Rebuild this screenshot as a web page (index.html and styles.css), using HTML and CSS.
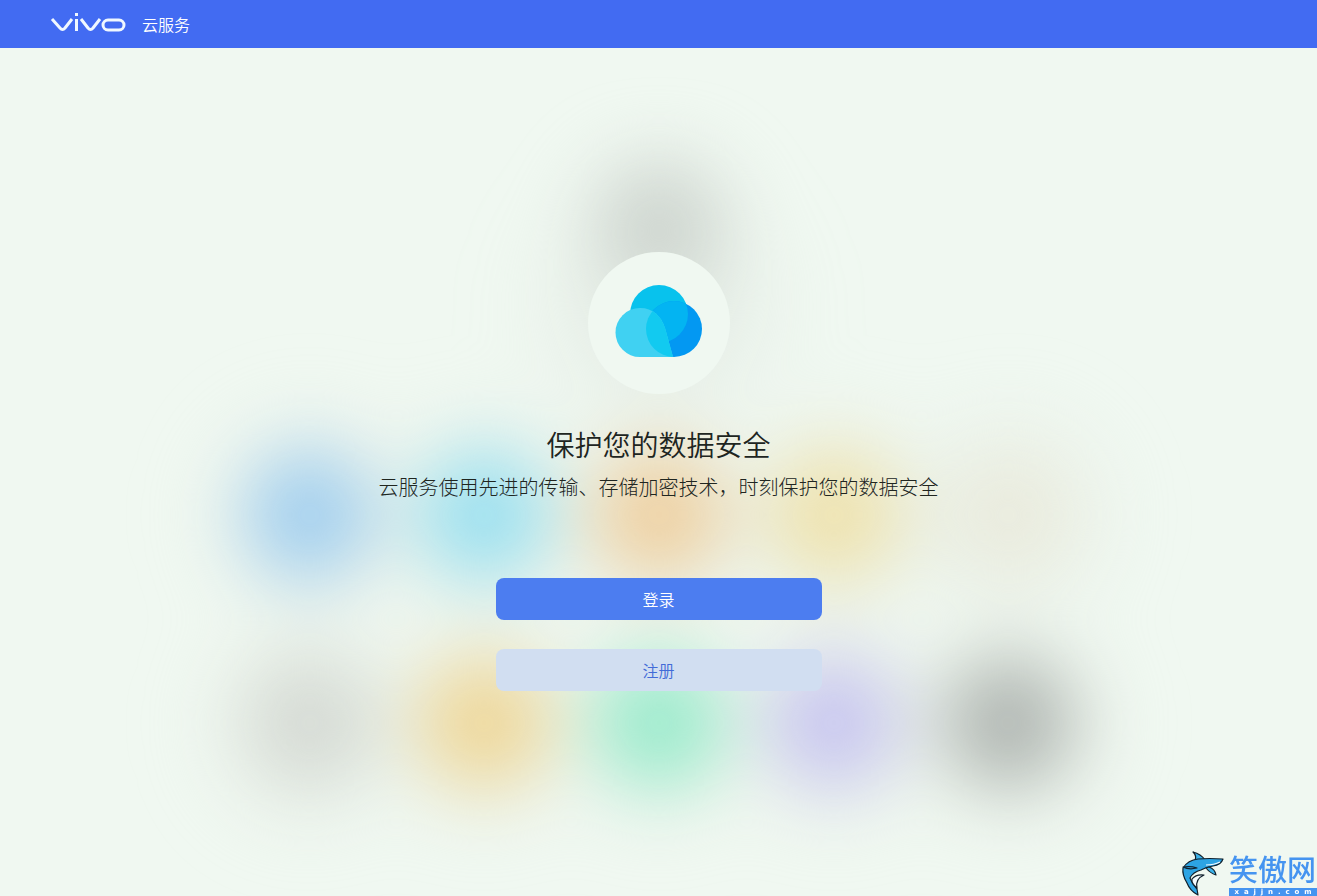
FILE: index.html
```
<!DOCTYPE html>
<html lang="zh-CN">
<head>
<meta charset="UTF-8">
<title>vivo 云服务</title>
<link rel="stylesheet" href="styles.css">
</head>
<body>
<header>
    <a class="logo" href="#" aria-label="vivo">
        <svg width="76" height="24" viewBox="0 0 76 24" fill="none" stroke="#f0f8ff" stroke-width="3" stroke-linejoin="round">
            <path d="M2 7L10 16Q12.500 19 15 16L22 7"/>
            <path d="M26.500 7V19"/>
            <path d="M26.500 1V4"/>
            <path d="M31 7L38 16Q40.500 19 43 16L50 7"/>
            <rect x="53" y="8" width="21" height="10" rx="5"/>
        </svg>
    </a>
    <span class="service">云服务</span>
</header>
<main>
    <div class="backdrop" aria-hidden="true">
        <i class="gray-top"></i>
        <i class="blue"></i>
        <i class="cyan"></i>
        <i class="orange"></i>
        <i class="yellow"></i>
        <i class="beige"></i>
        <i class="silver"></i>
        <i class="amber"></i>
        <i class="green"></i>
        <i class="violet"></i>
        <i class="dark"></i>
    </div>
    <div class="cloud">
        <svg width="88" height="74" viewBox="0 0 88 74">
            <defs>
                <clipPath id="rightClip"><circle cx="59" cy="45" r="28"/></clipPath>
                <clipPath id="leftClip"><path d="M25 73A24 24 0 1 1 25 24C38 24 46 32 50 44L58 73Z"/></clipPath>
            </defs>
            <circle cx="44" cy="30" r="29" fill="#08c2ed"/>
            <circle cx="59" cy="45" r="28" fill="#0398f2"/>
            <circle cx="44" cy="30" r="29" fill="#03b4f2" clip-path="url(#rightClip)"/>
            <path d="M25 73A24 24 0 1 1 25 24C38 24 46 32 50 44L58 73Z" fill="#40d1f2"/>
            <circle cx="59" cy="45" r="28" fill="#12caf0" clip-path="url(#leftClip)"/>
        </svg>
    </div>
    <h1>保护您的数据安全</h1>
    <p>云服务使用先进的传输、存储加密技术，时刻保护您的数据安全</p>
    <button type="button" class="login">登录</button>
    <button type="button" class="register">注册</button>
</main>
<div class="watermark">
    <svg width="44" height="46" viewBox="0 0 44 46" stroke="#10202c" stroke-width="1.2" stroke-linejoin="round">
        <path d="M14 10Q16 6 12 2Q20 4 24 10Z" fill="#3cb4ec"/>
        <path d="M2 18Q7 10 17 9Q28 8 42 9Q40 15 32 16Q25 17 20 20Q12 22 9 28Q11 34 16 39L17 45Q9 41 6 33Q1 25 2 18Z" fill="#2da4e4"/>
        <path d="M16 38Q14 29 23 25Q15 24 11 29Q10 33 16 38Z" fill="#f4fbff"/>
        <path d="M28 17Q34 19 35 25Q29 23 25 18Z" fill="#3cb4ec"/>
        <path d="M2 17Q8 20 16 18Q10 16 2 17Z" fill="#3cb4ec"/>
        <path d="M25 15Q33 15 39 12" fill="none" stroke="#f4fbff"/>
    </svg>
    <div class="site">
        <strong>笑傲网</strong>
        <small>x  a  j  j  n  .  c  o  m</small>
    </div>
</div>
</body>
</html>
```

FILE: styles.css
```
*{box-sizing:border-box;}
body{
    margin:0;
    min-height:100vh;
    display:flex;
    flex-direction:column;
    font-family:"Noto Sans CJK SC",sans-serif;
    font-weight:300;
    background:#f0f8f1;
    color:#20251f;
}
header{
    display:flex;
    align-items:center;
    height:48px;
    padding:0 50px;
    gap:16px;
    background:#426bf2;
    color:#fff;
}
.logo{display:flex;}
.service{font-size:16px;line-height:24px;font-weight:350;}
main{
    position:relative;
    flex:1;
    display:flex;
    flex-direction:column;
    align-items:center;
    padding-top:204px;
    overflow:hidden;
}
.backdrop{
    position:absolute;
    top:112px;
    left:50%;
    transform:translateX(-50%);
    display:grid;
    grid-template-columns:repeat(5,130px);
    grid-template-rows:212px 130px 130px;
    column-gap:45px;
    row-gap:78px;
    filter:blur(36px);
}
.backdrop i{
    border-radius:50%;
    box-shadow:0 0 50px 16px rgba(225,232,222,0.6);
}
.backdrop .gray-top{
    grid-column:3;
    height:130px;
    background:#ced5cf;
    box-shadow:0 80px 70px 30px rgba(210,217,211,0.4);
}
.backdrop .blue{grid-column:1;background:#a2cfef;}
.cyan{background:#9ae0f0;}
.orange{background:#efd0a0;}
.yellow{background:#efe2ac;}
.beige{background:#eaebdd;}
.silver{background:#d5dad4;}
.amber{background:#efd798;}
.green{background:#9aebcc;}
.violet{background:#c8c6f0;}
.dark{background:#b0b6b2;}
.cloud{
    position:relative;
    display:flex;
    align-items:center;
    justify-content:center;
    width:142px;
    height:142px;
    padding-bottom:4px;
    border-radius:50%;
    background:#f0f8f1;
}
h1,p,button{position:relative;}
h1{
    margin:30px 0 0;
    font-size:28px;
    line-height:40px;
    font-weight:350;
}
p{
    margin:8px 0 76px;
    font-size:20px;
    line-height:30px;
}
button{
    width:326px;
    height:42px;
    border:none;
    border-radius:8px;
    font-family:inherit;
    font-size:16px;
    font-weight:350;
    cursor:pointer;
}
.login{background:#4c7df0;color:#fff;}
.register{
    margin-top:29px;
    background:#d1def1;
    color:#426bd8;
}
.watermark{
    position:fixed;
    right:0;
    bottom:0;
    display:flex;
    align-items:flex-end;
    gap:4px;
}
.site{
    display:flex;
    flex-direction:column;
    width:88px;
    color:#4594f0;
}
.site strong{
    margin-bottom:2px;
    font-size:29px;
    line-height:36px;
    font-weight:500;
    white-space:nowrap;
}
.site small{
    height:8px;
    font:bold 7px/8px "DejaVu Sans",sans-serif;
    text-align:center;
    white-space:pre;
    background:#4594f0;
    color:#fff;
}
```
